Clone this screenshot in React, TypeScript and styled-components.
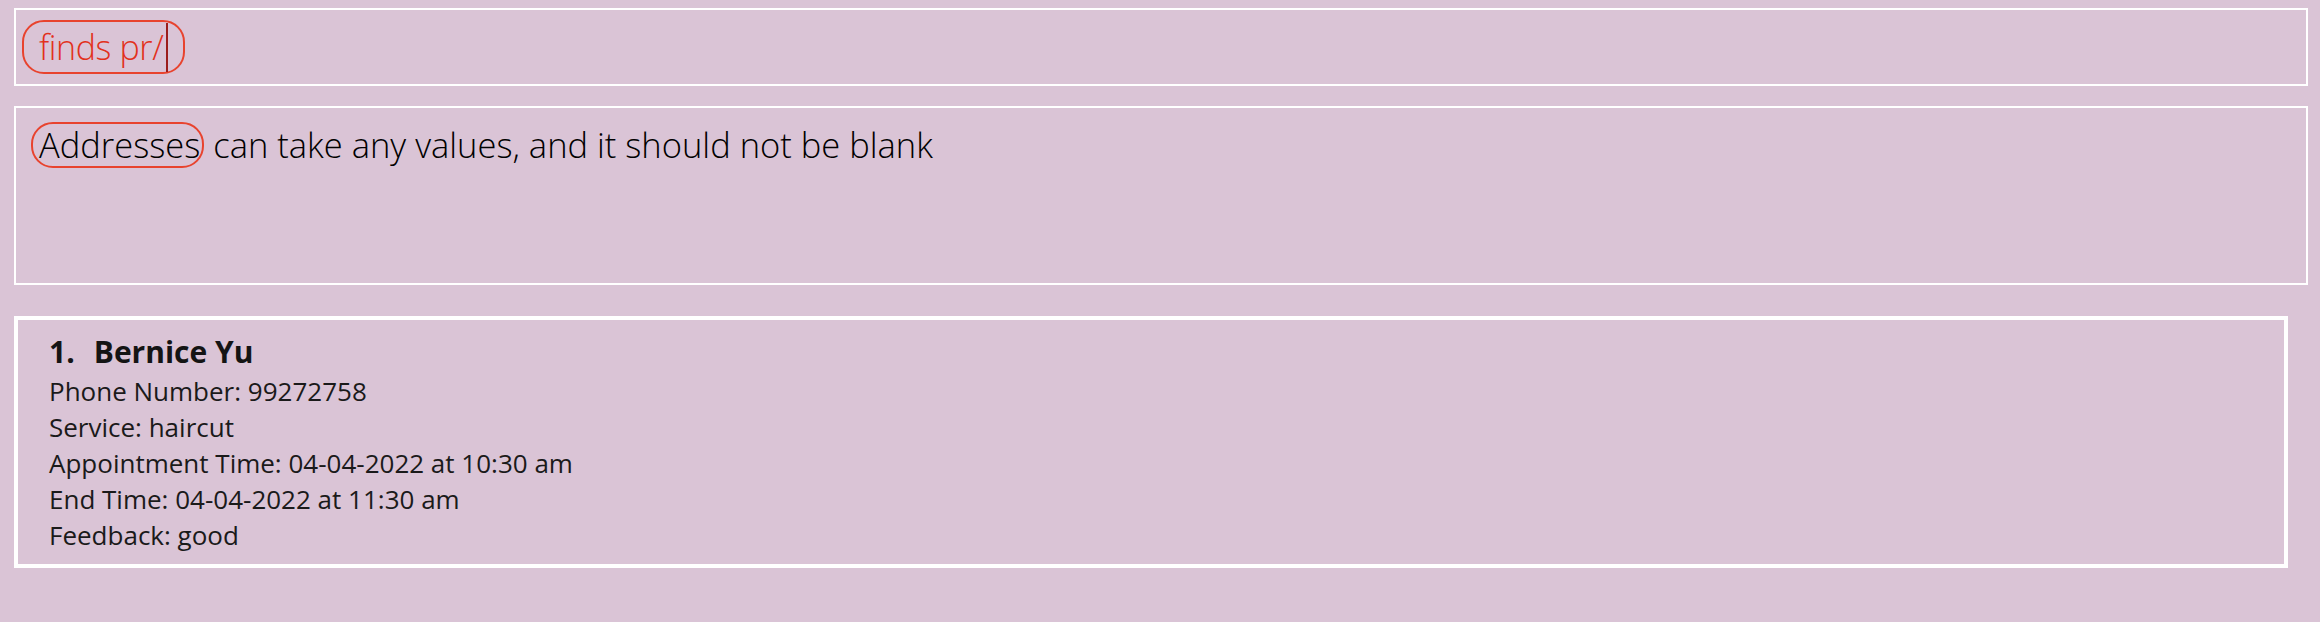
import React from "react";
import styled, { createGlobalStyle } from "styled-components";

const Global = createGlobalStyle`
  html, body {
    margin: 0;
    padding: 0;
    background: #dac4d6;
  }
  body {
    font-family: "Open Sans", "Liberation Sans", sans-serif;
  }
`;

const Page = styled.div`
  display: flex;
  flex-direction: column;
  padding: 8px 0 0 14px;
  min-height: 614px;
  background: #dac4d6;
`;

const CommandBox = styled.div`
  display: flex;
  align-items: center;
  height: 74px;
  margin-right: 12px;
  padding-left: 6px;
  border: 2px solid #ffffff;
`;

const Pill = styled.span<{ $pad: string }>`
  display: inline-flex;
  align-items: center;
  border: 2px solid #e8432e;
  border-radius: 22px;
  padding: ${(p) => p.$pad};
`;

const CommandText = styled.span`
  font-family: "Open Sans", sans-serif;
  font-weight: 300;
  font-size: 34px;
  letter-spacing: -0.4px;
  line-height: 50px;
  color: #e2311c;
  white-space: pre;
`;

const Caret = styled.span`
  display: inline-block;
  width: 2px;
  height: 49px;
  margin-left: 3px;
  background: #9b1c1c;
`;

const ResultBox = styled.div`
  margin: 20px 12px 0 0;
  padding: 14px 0 0 15px;
  border: 2px solid #ffffff;
  font-family: "Open Sans", sans-serif;
  font-weight: 300;
  font-size: 34.5px;
  line-height: 42px;
  color: #000000;
  box-sizing: border-box;
  height: 179px;
`;

const ResultLine = styled.div`
  display: flex;
  align-items: center;
  white-space: pre;
`;

const Card = styled.div`
  display: flex;
  flex-direction: column;
  margin: 31px 32px 0 0;
  padding: 11px 0 11px 31px;
  border: 4px solid #ffffff;
  color: #1a1a1a;
`;

const Title = styled.div`
  display: flex;
  gap: 19px;
  font-size: 30px;
  font-weight: 700;
  line-height: 42px;
  color: #141414;
`;

const Detail = styled.div`
  font-size: 26px;
  line-height: 36px;
`;

const details = [
  "Phone Number: 99272758",
  "Service: haircut",
  "Appointment Time: 04-04-2022 at 10:30 am",
  "End Time: 04-04-2022 at 11:30 am",
  "Feedback: good",
];

export default function App() {
  return (
    <>
      <Global />
      <Page>
        <CommandBox>
          <Pill $pad="0 15px">
            <CommandText>finds pr/</CommandText>
            <Caret />
          </Pill>
        </CommandBox>
        <ResultBox>
          <ResultLine>
            <Pill $pad="0 2px 0 6px">Addresses</Pill>
            {" can take any values, and it should not be blank"}
          </ResultLine>
        </ResultBox>
        <Card>
          <Title>
            <span>1.</span>
            <span>Bernice Yu</span>
          </Title>
          {details.map((d) => (
            <Detail key={d}>{d}</Detail>
          ))}
        </Card>
      </Page>
    </>
  );
}
